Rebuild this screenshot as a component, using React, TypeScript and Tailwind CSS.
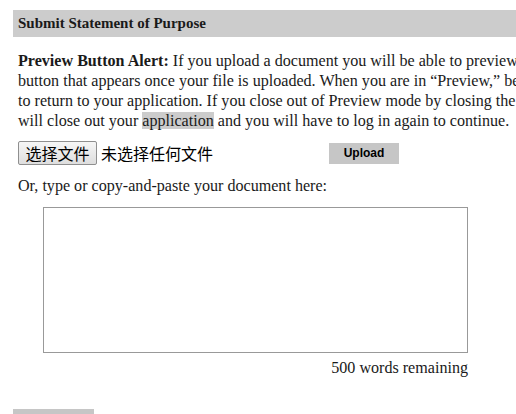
import * as React from 'react'

/* Submit Statement of Purpose — a plain application form section, clipped at the right edge */

const serif = 'font-["Liberation_Serif","DejaVu_Serif",serif]'

export default function App() {
  return (
    <div className={`w-[516px] h-[414px] overflow-hidden bg-white text-[#1a1a1a] ${serif}`}>
      <div className="w-[600px] pt-[10px] pl-[13px]">
        {/* ── Section header ── */}
        <div className="h-[27px] bg-[#cccccc] pl-[5px] flex items-center text-[15px] font-bold">
          Submit Statement of Purpose
        </div>

        {/* ── Alert copy ── */}
        <p className="mt-[14px] pl-[5px] text-[16.1px] leading-[20px] whitespace-nowrap">
          <b>Preview Button Alert:</b> If you upload a document you will be able to preview it by clicking the
          <br />
          button that appears once your file is uploaded. When you are in “Preview,” be sure to click
          <br />
          to return to your application. If you close out of Preview mode by closing the window, you
          <br />
          will close out your <span className="bg-[#cccccc]">application</span> and you will have to log in again to continue.
        </p>

        {/* ── File picker + upload ── */}
        <div className="mt-[10px] pl-[5px] flex items-center h-[24px]">
          <button
            type="button"
            className='h-[24px] w-[79px] border border-[#8f8f8f] rounded-[2px] bg-gradient-to-b from-[#f6f6f6] to-[#dedede] text-[16px] text-black font-["Noto_Sans_CJK_SC",sans-serif] leading-none'
          >
            选择文件
          </button>
          <span className='ml-[4px] text-[16px] text-black font-["Noto_Sans_CJK_SC",sans-serif]'>未选择任何文件</span>
          <button
            type="button"
            className='ml-[116px] h-[21px] w-[70px] bg-[#c6c6c6] text-[12px] font-bold text-black font-["Liberation_Sans",Arial,sans-serif]'
          >
            Upload
          </button>
        </div>

        <p className="mt-[11px] pl-[5px] text-[16.1px] leading-[20px]">
          Or, type or copy-and-paste your document here:
        </p>

        {/* ── Text entry ── */}
        <div className="pl-[30px] mt-[11px]">
          <textarea className="block w-[425px] h-[146px] border border-[#999999] resize-none outline-none" />
          <div className="w-[425px] text-right text-[16.1px] leading-[20px] mt-[5px]">500 words remaining</div>
        </div>

        <div className="mt-[31px] w-[81px] h-[10px] bg-[#c6c6c6]" />
      </div>
    </div>
  )
}
